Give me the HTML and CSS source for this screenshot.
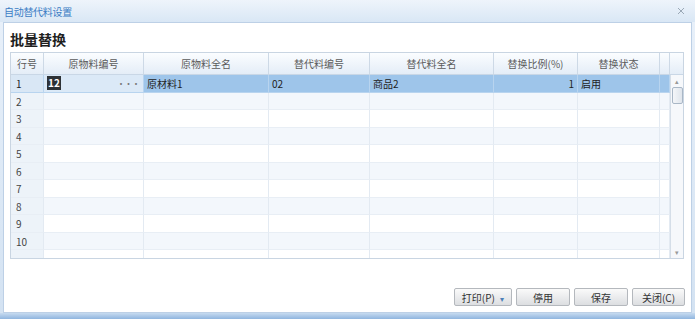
FILE: index.html
```html
<!DOCTYPE html>
<html lang="zh-CN">
<head>
    <meta charset="UTF-8">
    <title>自动替代料设置</title>
    <link rel="stylesheet" href="styles.css">
</head>
<body>
    <div class="window">
        <div class="titlebar">
            <span class="title">自动替代料设置</span>
            <svg class="close-icon" width="8" height="8" viewBox="0 0 8 8">
                <path d="M1 1 L7 7 M7 1 L1 7" stroke="#9aa8b6" stroke-width="1" fill="none"/>
            </svg>
        </div>

        <div class="panel">
            <h1>批量替换</h1>

            <div class="grid">
                <div class="grid-head">
                    <div class="hcell">行号</div>
                    <div class="hcell">原物料编号</div>
                    <div class="hcell">原物料全名</div>
                    <div class="hcell">替代料编号</div>
                    <div class="hcell">替代料全名</div>
                    <div class="hcell">替换比例(%)</div>
                    <div class="hcell">替换状态</div>
                    <div class="hcell"></div>
                    <div class="hcell"></div>
                </div>

                <div class="grid-body">
                    <div class="rows">
                        <div class="row selected">
                            <div class="cell num">1</div>
                            <div class="cell editing"><span class="sel-text">12</span><span class="dots">···</span></div>
                            <div class="cell">原材料1</div>
                            <div class="cell">02</div>
                            <div class="cell">商品2</div>
                            <div class="cell right">1</div>
                            <div class="cell">启用</div>
                            <div class="cell"></div>
                        </div>
                        <div class="row"><div class="cell num">2</div><div class="cell"></div><div class="cell"></div><div class="cell"></div><div class="cell"></div><div class="cell"></div><div class="cell"></div><div class="cell"></div></div>
                        <div class="row"><div class="cell num">3</div><div class="cell"></div><div class="cell"></div><div class="cell"></div><div class="cell"></div><div class="cell"></div><div class="cell"></div><div class="cell"></div></div>
                        <div class="row"><div class="cell num">4</div><div class="cell"></div><div class="cell"></div><div class="cell"></div><div class="cell"></div><div class="cell"></div><div class="cell"></div><div class="cell"></div></div>
                        <div class="row"><div class="cell num">5</div><div class="cell"></div><div class="cell"></div><div class="cell"></div><div class="cell"></div><div class="cell"></div><div class="cell"></div><div class="cell"></div></div>
                        <div class="row"><div class="cell num">6</div><div class="cell"></div><div class="cell"></div><div class="cell"></div><div class="cell"></div><div class="cell"></div><div class="cell"></div><div class="cell"></div></div>
                        <div class="row"><div class="cell num">7</div><div class="cell"></div><div class="cell"></div><div class="cell"></div><div class="cell"></div><div class="cell"></div><div class="cell"></div><div class="cell"></div></div>
                        <div class="row"><div class="cell num">8</div><div class="cell"></div><div class="cell"></div><div class="cell"></div><div class="cell"></div><div class="cell"></div><div class="cell"></div><div class="cell"></div></div>
                        <div class="row"><div class="cell num">9</div><div class="cell"></div><div class="cell"></div><div class="cell"></div><div class="cell"></div><div class="cell"></div><div class="cell"></div><div class="cell"></div></div>
                        <div class="row"><div class="cell num">10</div><div class="cell"></div><div class="cell"></div><div class="cell"></div><div class="cell"></div><div class="cell"></div><div class="cell"></div><div class="cell"></div></div>
                        <div class="row"><div class="cell num"></div><div class="cell"></div><div class="cell"></div><div class="cell"></div><div class="cell"></div><div class="cell"></div><div class="cell"></div><div class="cell"></div></div>
                    </div>
                    <div class="scrollbar">
                        <span class="arrow">▴</span>
                        <div class="thumb"></div>
                        <div class="track"></div>
                        <span class="arrow">▾</span>
                    </div>
                </div>
            </div>

            <div class="button-group">
                <button class="btn print">打印(P) <span class="caret">▾</span></button>
                <button class="btn">停用</button>
                <button class="btn">保存</button>
                <button class="btn">关闭(C)</button>
            </div>
        </div>
        <div class="bottom-strip"></div>
    </div>
</body>
</html>
```

FILE: styles.css
```css
html, body {
    margin: 0;
    padding: 0;
}
body {
    width: 695px;
    height: 319px;
    overflow: hidden;
    font-family: "Noto Sans CJK SC", "Liberation Sans", sans-serif;
    background-color: #d4e3f3;
}
.window {
    display: flex;
    flex-direction: column;
    height: 319px;
    background: linear-gradient(#e9f1fa, #d3e2f2);
}
.titlebar {
    height: 22px;
    display: flex;
    align-items: center;
    justify-content: space-between;
    padding: 0 10px 0 4px;
    background: linear-gradient(#eef4fb, #d9e7f5);
}
.title {
    font-size: 10px;
    color: #3b7cc4;
    letter-spacing: -0.3px;
}
.close-icon {
    display: block;
}
.panel {
    flex: 1;
    margin: 0 3px;
    background: #ffffff;
    border: 1px solid #bdd0e6;
    padding: 0 6px;
    display: flex;
    flex-direction: column;
}
h1 {
    margin: 7px 0 0 0;
    font-size: 14px;
    line-height: 18px;
    font-weight: bold;
    color: #1e1e1e;
    height: 22px;
}
.grid {
    border: 1px solid #c9d5e2;
    width: 672px;
    font-size: 10px;
    color: #3a3a3a;
}
.grid-head {
    display: grid;
    grid-template-columns: 33px 100px 125px 101px 124px 84px 82px 10px 13px;
    height: 21px;
    background: linear-gradient(#fbfdff, #e4edf7);
    border-bottom: 1px solid #c9d7e6;
}
.hcell {
    border-right: 1px solid #cdd9e6;
    text-align: center;
    line-height: 21px;
    color: #5a5a5a;
    white-space: nowrap;
}
.hcell:last-child {
    border-right: none;
}
.grid-body {
    display: flex;
    height: 183px;
    overflow: hidden;
}
.rows {
    width: 659px;
}
.row {
    display: grid;
    grid-template-columns: 33px 100px 125px 101px 124px 84px 82px 10px;
    height: 17.5px;
}
.row:nth-child(even) {
    background: #f3f7fc;
}
.cell {
    border-right: 1px solid #e3eaf2;
    border-bottom: 1px solid #e8eef5;
    line-height: 17px;
    padding-left: 3px;
    white-space: nowrap;
    overflow: hidden;
}
.cell.num {
    background: #edf3f9;
    padding-left: 5px;
    color: #444;
}
.cell.right {
    text-align: right;
    padding-right: 3px;
}
.row.selected {
    background: #9ec5ea;
}
.row.selected .cell {
    border-color: #b8d4ef;
    color: #222;
}
.row.selected .cell.num {
    background: #d9e7f5;
}
.cell.editing {
    background: #dbe9f7;
    display: flex;
    align-items: center;
    justify-content: space-between;
    padding-right: 4px;
}
.sel-text {
    background: #2d3236;
    color: #fff;
    font-weight: bold;
    line-height: 14px;
    padding: 0 1px;
}
.dots {
    color: #777;
    font-size: 9px;
    letter-spacing: -1.5px;
}
.scrollbar {
    width: 13px;
    border-left: 1px solid #d5dee8;
    background: #f6f8fb;
    display: flex;
    flex-direction: column;
    align-items: center;
}
.arrow {
    font-size: 7px;
    line-height: 12px;
    color: #999;
}
.thumb {
    width: 9px;
    height: 15px;
    border: 1px solid #a9b7c6;
    border-radius: 2px;
    background: linear-gradient(to right, #f4f6f9, #dfe5ec);
}
.track {
    flex: 1;
}
.button-group {
    display: flex;
    justify-content: flex-end;
    gap: 4px;
    margin-top: 29px;
}
.btn {
    height: 18px;
    width: 54px;
    padding: 0;
    font-family: "Noto Sans CJK SC", "Liberation Sans", sans-serif;
    font-size: 10px;
    color: #333;
    border: 1px solid #b4b8bd;
    border-radius: 2px;
    background: linear-gradient(#fafafa, #dcdee1);
}
.btn:last-child {
    width: 53px;
}
.btn.print {
    width: 58px;
}
.caret {
    color: #4d7fb8;
    font-size: 8px;
    margin-left: 3px;
}
.bottom-strip {
    height: 6px;
    background: linear-gradient(#c7dbf0, #8fb5df);
}
```
